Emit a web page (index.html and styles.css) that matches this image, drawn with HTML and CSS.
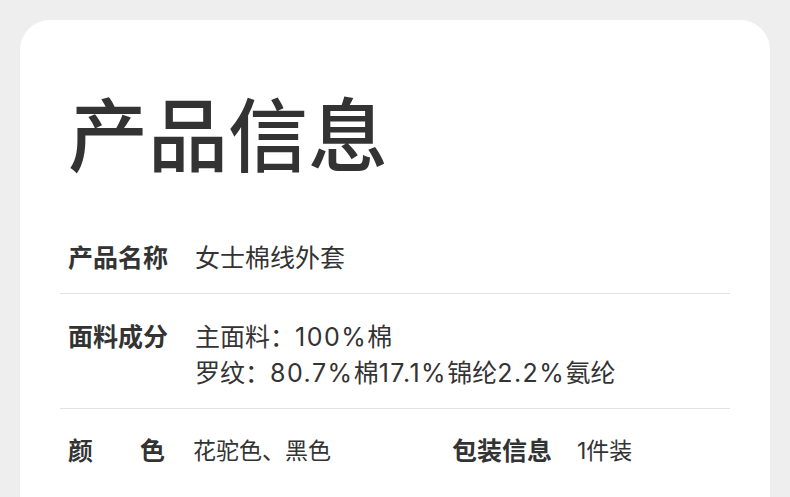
FILE: index.html
```html
<!DOCTYPE html>
<html lang="zh-CN">
<head>
    <meta charset="UTF-8">
    <meta name="viewport" content="width=device-width, initial-scale=1.0">
    <title>产品信息</title>
    <link rel="stylesheet" href="styles.css">
</head>
<body>
    <div class="card">
        <h1 class="title">产品信息</h1>
        <div class="info-row">
            <span class="label">产品名称</span>
            <span class="value">女士棉线外套</span>
        </div>
        <div class="info-row">
            <span class="label">面料成分</span>
            <span class="value">主面料：<span class="num">100%</span>棉<br>罗纹：<span class="num">80.7%</span>棉<span class="num">17.1%</span>锦纶<span class="num">2.2%</span>氨纶</span>
        </div>
        <div class="info-row info-pair">
            <div class="pair">
                <span class="label label-spread">颜<i></i>色</span>
                <span class="value small">花驼色、黑色</span>
            </div>
            <div class="pair">
                <span class="label">包装信息</span>
                <span class="value small">1件装</span>
            </div>
        </div>
    </div>
</body>
</html>
```

FILE: styles.css
```css
body {
    margin: 0;
    padding: 20px 20px 0;
    background: #eeeeee;
    font-family: "Liberation Sans", "Noto Sans CJK SC", sans-serif;
    color: #333;
    overflow: hidden;
}
.card {
    background: #fff;
    border-radius: 30px 30px 0 0;
    padding: 70px 40px 0;
    height: 490px;
    box-sizing: border-box;
}
.title {
    margin: 0 0 29px 8px;
    font-size: 80px;
    font-weight: 500;
    line-height: 96px;
}
.info-row {
    display: flex;
    padding: 25px 8px 17px;
    line-height: 36px;
    border-bottom: 1px solid #e2e2e2;
}
.info-row:last-child {
    border-bottom: none;
    padding-top: 24px;
}
.label {
    font-weight: bold;
    width: 100px;
    flex-shrink: 0;
    margin-right: 27px;
    font-size: 25px;
}
.value {
    font-family: "Inter", "Noto Sans CJK SC", sans-serif;
    font-size: 25px;
}
.value .num {
    letter-spacing: 1.5px;
}
.value.small {
    font-size: 23px;
}
.label-spread {
    display: flex;
    justify-content: space-between;
    width: 97px;
    margin-right: 28px;
}
.label-spread i {
    flex: 1;
}
.pair {
    display: flex;
    width: 384px;
}
.pair + .pair {
    width: auto;
}
.pair + .pair .label {
    margin-right: 25px;
}
```
